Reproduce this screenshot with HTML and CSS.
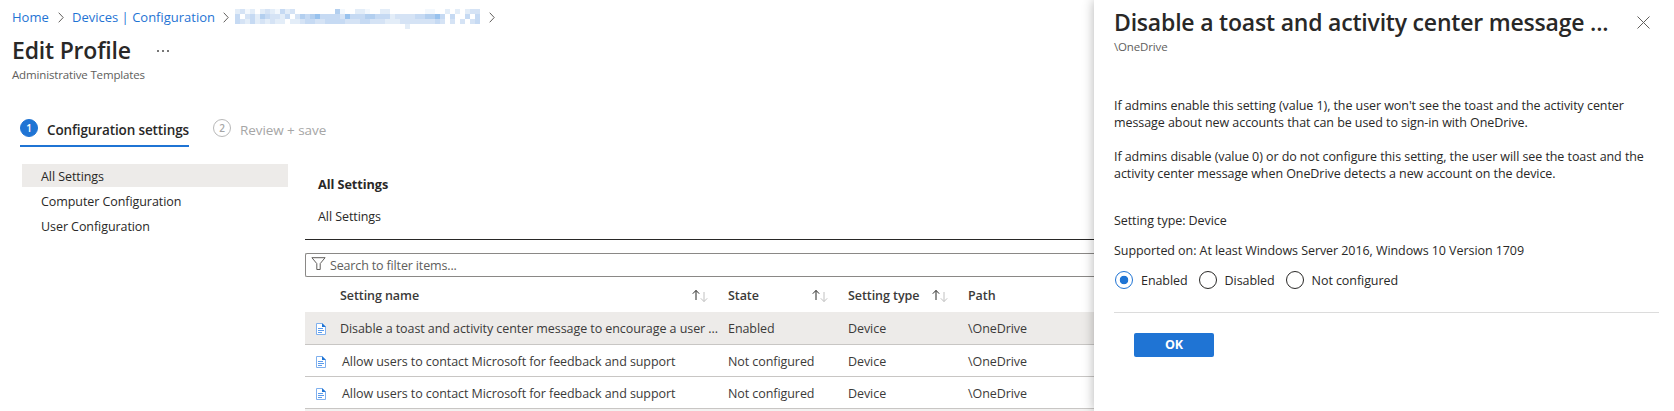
FILE: index.html
```
<!DOCTYPE html>
<html lang="en">
<head>
<meta charset="utf-8">
<title>Edit Profile</title>
<link rel="stylesheet" href="styles.css">
</head>
<body>
<div class="page">
  <main class="main">
    <nav class="crumbs">
      <a class="home">Home</a>
      <svg class="chev" width="6" height="11" viewBox="0 0 6 11"><path d="M.7.7 5.2 5.5.7 10.3"/></svg>
      <a class="devices">Devices | Configuration</a>
      <svg class="chev" width="6" height="11" viewBox="0 0 6 11"><path d="M.7.7 5.2 5.5.7 10.3"/></svg>
      <span class="mosaic" id="mosaic"></span>
      <svg class="chev" width="6" height="11" viewBox="0 0 6 11"><path d="M.7.7 5.2 5.5.7 10.3"/></svg>
    </nav>
    <header class="head">
      <h1>Edit Profile</h1>
      <span class="more"><i></i><i></i><i></i></span>
    </header>
    <p class="subtitle">Administrative Templates</p>
    <div class="steps">
      <div class="step active"><span class="num">1</span><span class="lbl">Configuration settings</span></div>
      <div class="step"><span class="num">2</span><span class="lbl">Review + save</span></div>
    </div>
    <div class="body">
      <ul class="side">
        <li class="sel">All Settings</li>
        <li>Computer Configuration</li>
        <li>User Configuration</li>
      </ul>
      <section class="content">
        <h2>All Settings</h2>
        <p class="path">All Settings</p>
        <div class="search">
          <svg width="15" height="14" viewBox="0 0 15 14"><path d="M.9.7h13.2L9.2 6.6v5.9H5.8V6.6z"/></svg>
          <span>Search to filter items...</span>
        </div>
        <div class="grid">
          <div class="row hd"><span></span><span class="c">Setting name<svg class="sort" width="16" height="14" viewBox="0 0 16 14"><path class="up" d="M4 11V1.5M.8 4.7 4 1.4l3.2 3.3"/><path class="dn" d="M12 3v9.5M8.8 9.3 12 12.6l3.2-3.3"/></svg></span><span class="c">State<svg class="sort" width="16" height="14" viewBox="0 0 16 14"><path class="up" d="M4 11V1.5M.8 4.7 4 1.4l3.2 3.3"/><path class="dn" d="M12 3v9.5M8.8 9.3 12 12.6l3.2-3.3"/></svg></span><span class="c">Setting type<svg class="sort" width="16" height="14" viewBox="0 0 16 14"><path class="up" d="M4 11V1.5M.8 4.7 4 1.4l3.2 3.3"/><path class="dn" d="M12 3v9.5M8.8 9.3 12 12.6l3.2-3.3"/></svg></span><span>Path</span></div>
          <div class="row on"><svg class="doc" width="10" height="12" viewBox="0 0 10 12"><path class="pg" d="M.5.5H6L9.5 4v7.5h-9z"/><path class="fold" d="M6 0l4 4H6z"/><path class="ln" d="M2 5.5h5M2 7.5h6M2 9.5h4"/></svg><span>Disable a toast and activity center message to encourage a user ...</span><span>Enabled</span><span>Device</span><span>\OneDrive</span></div>
          <div class="row"><svg class="doc" width="10" height="12" viewBox="0 0 10 12"><path class="pg" d="M.5.5H6L9.5 4v7.5h-9z"/><path class="fold" d="M6 0l4 4H6z"/><path class="ln" d="M2 5.5h5M2 7.5h6M2 9.5h4"/></svg><span class="t2">Allow users to contact Microsoft for feedback and support</span><span>Not configured</span><span>Device</span><span>\OneDrive</span></div>
          <div class="row"><svg class="doc" width="10" height="12" viewBox="0 0 10 12"><path class="pg" d="M.5.5H6L9.5 4v7.5h-9z"/><path class="fold" d="M6 0l4 4H6z"/><path class="ln" d="M2 5.5h5M2 7.5h6M2 9.5h4"/></svg><span class="t2">Allow users to contact Microsoft for feedback and support</span><span>Not configured</span><span>Device</span><span>\OneDrive</span></div>
          <div class="row next"></div>
        </div>
      </section>
    </div>
  </main>
  <aside class="panel">
    <header class="phead">
      <h2>Disable a toast and activity center message ...</h2>
      <svg class="close" width="13" height="13" viewBox="0 0 13 13"><path d="M.5.5l12 12M12.5.5l-12 12"/></svg>
    </header>
    <p class="psub">\OneDrive</p>
    <div class="desc">
      <p>If admins enable this setting (value 1), the user won't see the toast and the activity center<br>message about new accounts that can be used to sign-in with OneDrive.</p>
      <p>If admins disable (value 0) or do not configure this setting, the user will see the toast and the<br>activity center message when OneDrive detects a new account on the device.</p>
    </div>
    <p class="meta">Setting type: Device</p>
    <p class="meta">Supported on: At least Windows Server 2016, Windows 10 Version 1709</p>
    <div class="radios">
      <span class="radio checked"><i></i>Enabled</span>
      <span class="radio"><i></i>Disabled</span>
      <span class="radio"><i></i>Not configured</span>
    </div>
    <div class="foot"><button>OK</button></div>
  </aside>
</div>
<script src="mosaic.js"></script>
</body>
</html>
```
FILE: mosaic.js
```
// Redacted profile name: rows of 5px blocks, 0 = white to 6 = darkest.
const shades = ["#ffffff", "#f3f8fd", "#e3edf8", "#d5e3f5", "#c6daf3", "#b3cfef", "#98c2ee"];
const rows = [
  "2312023214230000000051002210022000000011002020233",
  "4034254332403545644443644455444233334455664040404",
  "4324232322022344334444333443332223333333430303034",
  "0000000000000000000000000000000000200000000000000"
];
rows[1] = "4034254332403545644443644455444233334455640404030".slice(0, 45) + "0404";
const box = document.getElementById("mosaic");
for (const row of rows) {
  for (const c of row) {
    const cell = document.createElement("i");
    cell.style.background = shades[c];
    box.append(cell);
  }
}
```
FILE: styles.css
```
* { box-sizing: border-box; margin: 0; padding: 0; }
body { font: 12.5px/17px "Open Sans", "Noto Sans", sans-serif; letter-spacing: -.07px; color: #292827; background: #fff; overflow: hidden; }
.page { display: flex; width: 1674px; height: 411px; overflow: hidden; }
.main { width: 1094px; flex: none; }
.crumbs { display: flex; align-items: center; height: 34px; padding-left: 12px; color: #1f74d4; font-size: 13px; letter-spacing: 0; }
.home { width: 46px; }
.chev { fill: none; stroke: #605e5c; margin-right: 8px; flex: none; }
.devices { width: 151px; }
.mosaic { display: grid; grid-template-columns: repeat(49, 5px); grid-auto-rows: 5px; width: 245px; height: 20px; margin: 4px 9px 0 -2px; flex: none; }
.head { display: flex; height: 34px; align-items: center; padding-left: 12px; }
h1 { font-size: 23px; line-height: 32px; font-weight: 600; letter-spacing: -.2px; width: 145px; padding-bottom: 2px; }
.more { display: flex; gap: 3px; }
.more i { width: 2px; height: 2px; background: #777; }
.subtitle, .psub { font-size: 11.5px; line-height: 16px; letter-spacing: -.15px; color: #605e5c; }
.subtitle { padding: 0 12px; height: 46px; line-height: 13px; }
.steps { display: flex; padding-left: 20px; gap: 24px; height: 50px; }
.step { display: flex; height: 33px; padding-top: 5px; color: #a6a6a6; font-size: 13.5px; white-space: nowrap; }
.step .num { width: 18px; height: 18px; border: 1px solid #b8b8b8; border-radius: 50%; font-size: 10px; line-height: 16px; text-align: center; margin-right: 9px; font-weight: 600; flex: none; }
.step .lbl { line-height: 23px; }
.step.active { color: #292827; font-weight: 600; width: 169px; border-bottom: 2px solid #1f74d4; letter-spacing: -.12px; }
.active .num { background: #1f74d4; border-color: #1f74d4; color: #fff; }
.body { display: flex; align-items: flex-start; }
.side { list-style: none; width: 266px; margin-left: 22px; flex: none; display: grid; gap: 2px; }
.side li { height: 23px; line-height: 25px; padding-left: 19px; }
.sel { background: #edebe9; }
.content { margin-left: 17px; flex: 1; padding-top: 12px; }
.content h2 { font-size: 12.7px; line-height: 17px; padding-left: 13px; font-weight: 700; }
.path { padding: 15px 13px 0; height: 47px; border-bottom: 1px solid #292827; margin-bottom: 13px; }
.search { height: 24px; border: 1px solid #8a8886; border-right: 0; border-radius: 2px 0 0 2px; display: flex; align-items: center; padding-left: 5px; gap: 4px; color: #605e5c; }
.search span { letter-spacing: -.15px; }
.search svg { fill: none; stroke: #605e5c; margin-top: -2px; }
.grid .row { display: grid; grid-template-columns: 35px 388px 120px 120px 1fr; height: 32px; line-height: 29px; padding-top: 2px; border-bottom: 1px solid #c8c6c4; align-items: center; white-space: nowrap; color: #3b3a39; }
.grid .hd { height: 35px; border: 0; font-weight: 600; line-height: 33px; }
.grid .on { background: #edebe9; height: 33px; line-height: 30px; }
.grid .next { background: #f3f2f1; }
.c { display: flex; justify-content: space-between; align-items: center; padding-right: 20px; }
.t2 { padding-left: 2px; }
.sort { fill: none; }
.up { stroke: #292827; }
.dn { stroke: #c0c0c0; }
.doc { margin-left: 11px; }
.pg { fill: #fff; stroke: #7fb0ee; }
.fold { fill: #1f74d4; }
.ln { stroke: #5c9cec; }
.panel { flex: 1; min-width: 0; position: relative; background: #fff; padding: 6px 15px 0 20px; box-shadow: 0 0 11px rgba(0,0,0,.3); white-space: nowrap; }
.phead { display: flex; justify-content: space-between; align-items: center; height: 33px; padding-right: 9px; }
.phead h2 { font-size: 23px; line-height: 32px; font-weight: 600; letter-spacing: -.2px; padding-bottom: 2px; }
.close { fill: none; stroke: #605e5c; flex: none; }
.desc { padding-top: 42px; margin-bottom: 24px; }
.desc p + p { margin-top: 17px; }
.meta { line-height: 30px; }
.radios { display: flex; gap: 11px; height: 47px; padding-top: 5px; border-bottom: 1px solid #dcdcdc; }
.radio { display: flex; line-height: 20px; }
.radio i { width: 18px; height: 18px; border: 1px solid #292827; border-radius: 50%; margin-right: 8px; }
.checked i { margin-left: 1px; border-color: #1f74d4; background: radial-gradient(circle, #1f74d4 4px, #fff 4.6px); }
.foot { padding: 20px; }
button { display: block; width: 80px; height: 24px; border: 0; border-radius: 2px; background: #1f74d4; color: #fff; font: 700 12.5px/24px "Open Sans", sans-serif; }
```
